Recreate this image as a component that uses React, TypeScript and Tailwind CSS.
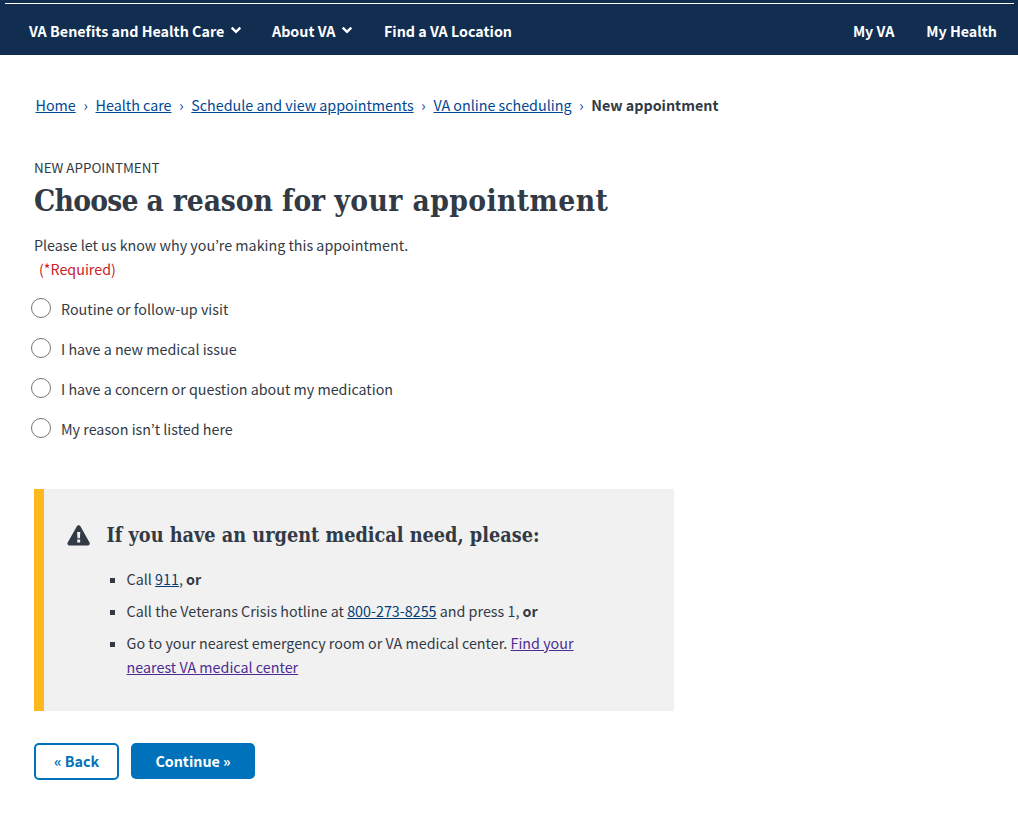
import React from "react";

const reasons = [
  "Routine or follow-up visit",
  "I have a new medical issue",
  "I have a concern or question about my medication",
  "My reason isn’t listed here",
];

const crumbs = ["Home", "Health care", "Schedule and view appointments", "VA online scheduling"];

function Chevron() {
  return (
    <svg width="12" height="8" viewBox="0 0 12 8" fill="none" className="mt-[-1px] ml-1.5">
      <path d="M1.7 1.7 6 5.9l4.3-4.2" stroke="white" strokeWidth="2.4" />
    </svg>
  );
}

function Bullet() {
  return <i className="mt-[11px] size-[5px] bg-[#323a45]" />;
}

export default function App() {
  return (
    <div className="h-[815px] w-[1018px] overflow-hidden bg-white font-['Noto_Sans_CJK_KR',sans-serif] text-[14.3px] leading-6 text-[#323a45]">
      <header className="h-[55px] bg-[#112e51] px-[5px] pt-[3px] text-white">
        <div className="h-px w-[1009px] bg-white" />
        <nav className="flex h-[51px] items-center pt-0.5 pr-4 pl-6 font-bold whitespace-nowrap">
          <a className="flex w-[243px] items-center"><span className="tracking-[0.02px]">VA Benefits and Health Care</span><Chevron /></a>
          <a className="flex w-[112px] items-center"><span>About VA</span><Chevron /></a>
          <a><span>Find a VA Location</span></a>
          <a className="ml-auto"><span>My VA</span></a>
          <a className="ml-8"><span>My Health</span></a>
        </nav>
      </header>
      <main className="pl-[34px]">
        <nav className="mt-[38px] flex h-6 items-center pl-[1.5px] whitespace-nowrap text-[#004795]">
          {crumbs.map((c) => (
            <React.Fragment key={c}>
              <a className="underline"><span>{c}</span></a>
              <span className="w-[19.8px] text-center">›</span>
            </React.Fragment>
          ))}
          <span className="font-bold text-[#323a45]">New appointment</span>
        </nav>
        <p className="mt-[38px] text-[13.4px]"><span>NEW APPOINTMENT</span></p>
        <h1 className="mt-1 font-['DejaVu_Serif_Condensed','DejaVu_Serif',serif] text-[29.7px] leading-[36px] font-bold whitespace-nowrap">
          <span className="tracking-[-0.75px]">Choose </span>
          <span className="tracking-[-0.1px]">a reason for </span>
          <span className="tracking-[0.4px]">your appointment</span>
        </h1>
        <p className="mt-[14px]"><span>Please let us know why you’re making this appointment.</span></p>
        <p className="pl-[5px] text-[#cd2026]"><span>(*Required)</span></p>
        <div className="mt-4 -ml-[3px] flex flex-col gap-4">
          {reasons.map((r) => (
            <label key={r} className="flex h-6 items-start">
              <span className="mt-px size-5 rounded-full border border-[#757575] bg-white" />
              <span className="ml-2.5">{r}</span>
            </label>
          ))}
        </div>
        <section className="mt-12 h-[222px] w-[640px] border-l-[10px] border-[#fdb81e] bg-[#f1f1f1] pt-8 pl-[23px]">
          <div className="flex h-7 items-center">
            <svg width="24" height="21" viewBox="0 0 24 21">
              <path d="M9.9 1.3a2 2 0 0 1 3.5 0l9.1 16.2a2 2 0 0 1-1.8 3H2.5A2 2 0 0 1 .7 17.500Z" fill="#323a45" />
              <path d="M10.1 7h3.200l-.4 6.200h-2.400ZM10.200 14.500h3v3h-3Z" fill="#f1f1f1" />
            </svg>
            <h2 className="ml-[15.5px] pt-0.5 font-['DejaVu_Serif_Condensed','DejaVu_Serif',serif] text-[19.7px] font-bold whitespace-nowrap"><span>If you have an urgent medical need, please:</span></h2>
          </div>
          <ul className="mt-[18px] flex flex-col gap-2 pl-[43px]">
            <li className="flex gap-[11.6px]"><Bullet /><p><span>Call <a className="text-[#003e73] underline">911</a>, <b>or</b></span></p></li>
            <li className="flex gap-[11.6px]"><Bullet /><p><span className="tracking-[0.01px]">Call the Veterans Crisis hotline at <a className="text-[#003e73] underline">800-273-8255</a> and press 1, <b>or</b></span></p></li>
            <li className="flex gap-[11.6px]"><Bullet /><p className="whitespace-nowrap"><span className="tracking-[0.01px]">Go to your nearest emergency room or VA medical center. <a className="text-[#4c2c92] underline">Find your<br />nearest VA medical center</a></span></p></li>
          </ul>
        </section>
        <div className="mt-8 flex gap-3 font-bold">
          <button className="h-[37px] w-[85px] rounded-[5px] border-2 border-[#0071bb] pb-px text-[#0071bb]">« Back</button>
          <button className="h-9 w-[124px] rounded-[5px] bg-[#0071bb] text-white">Continue »</button>
        </div>
      </main>
    </div>
  );
}
